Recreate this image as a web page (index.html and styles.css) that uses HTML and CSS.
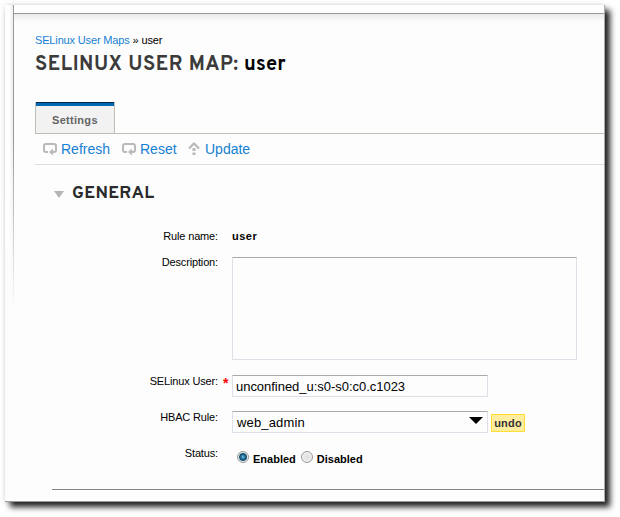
FILE: index.html
```html
<!DOCTYPE html>
<html lang="en">
<head>
<meta charset="utf-8">
<title>SELinux User Map</title>
<link rel="stylesheet" href="styles.css">
</head>
<body>
<main class="panel">
  <div class="frame-top"></div>
  <div class="frame-left"></div>
  <nav class="breadcrumb"><a>SELinux User Maps</a> » user</nav>
  <h1 class="title"><span class="title-kind">SELINUX USER MAP:</span><span class="title-name">user</span></h1>
  <div class="tabs"><div class="tab">Settings</div></div>
  <div class="toolbar">
    <a class="action refresh"><svg class="loop" width="15" height="13" viewBox="0 0 15 13"><path d="M5 9H3Q1 9 1 7V3Q1 1 3 1H11Q13 1 13 3V7Q13 9 11 9H8" fill="none" stroke="#b9b9b9" stroke-width="2"/><path d="M10 5.500V12.500L6 9Z" fill="#b9b9b9"/></svg>Refresh</a>
    <a class="action reset"><svg class="loop" width="15" height="13" viewBox="0 0 15 13"><path d="M5 9H3Q1 9 1 7V3Q1 1 3 1H11Q13 1 13 3V7Q13 9 11 9H8" fill="none" stroke="#b9b9b9" stroke-width="2"/><path d="M10 5.500V12.500L6 9Z" fill="#b9b9b9"/></svg>Reset</a>
    <a class="action update"><svg width="12" height="14" viewBox="0 0 12 14"><path d="M1 6.500L6 1.500L11 6.500" fill="none" stroke="#b9b9b9" stroke-width="2.200"/><path d="M4.500 6h3v3h-3zM4.500 10.500h3v2.500h-3z" fill="#b9b9b9"/></svg>Update</a>
  </div>
  <h2 class="section"><svg width="10" height="7" viewBox="0 0 10 7"><path d="M0 0H10L5 7Z" fill="#b5b5b5"/></svg>GENERAL</h2>
  <form class="form">
    <div class="row row-name"><span class="label">Rule name:</span><b class="value">user</b></div>
    <div class="row row-desc"><span class="label">Description:</span><div class="field area"></div></div>
    <div class="row row-user"><span class="label">SELinux User:</span><span class="required">*</span><div class="field input">unconfined_u:s0-s0:c0.c1023</div></div>
    <div class="row row-rule"><span class="label">HBAC Rule:</span><div class="field select">web_admin<svg width="14" height="7" viewBox="0 0 14 7"><path d="M0 0H14L7 7Z"/></svg></div><span class="undo">undo</span></div>
    <div class="row row-status"><span class="label">Status:</span><div class="options"><i class="radio checked"></i><b>Enabled</b><i class="radio second"></i><b>Disabled</b></div></div>
  </form>
</main>
</body>
</html>
```
FILE: styles.css
```css
* { box-sizing: border-box; }
body { margin: 0; width: 620px; height: 517px; overflow: hidden; background: #fff; font-family: "Liberation Sans", Arial, sans-serif; font-size: 11px; color: #000; }
.panel { position: relative; width: 600px; height: 497px; margin: 5px 0 0 5px; padding: 28px 0 0 30px; background: #fdfdfd; border-right: 1px solid #aaa; border-bottom: 1px solid #999; box-shadow: 5px 5px 6px #222, 0 0 5px #ddd; }
.frame-top { position: absolute; left: 9px; top: 0; width: 590px; height: 22px; background: linear-gradient(#fff 8px, #999 8px, #999 9px, #e9e9e9 9px, #fdfdfd 17px); }
.frame-left { position: absolute; left: 0; top: 0; width: 9px; height: 305px; background: linear-gradient(90deg, #fff 4px, #eee 8px, #999 8px); -webkit-mask-image: linear-gradient(#000 45%, transparent); mask-image: linear-gradient(#000 45%, transparent); }
.breadcrumb { height: 14px; line-height: 14px; white-space: nowrap; letter-spacing: -0.15px; }
a { color: #1680d3; }
.title { display: flex; margin: 7px 0 0; height: 23px; line-height: 23px; font-family: Overpass, "Open Sans", sans-serif; font-size: 20px; font-weight: 700; color: #3b3b3b; }
.title-kind { width: 209px; letter-spacing: .55px; white-space: nowrap; }
.title-name { color: #000; letter-spacing: .2px; }
.tabs { height: 57px; padding-top: 25px; border-bottom: 1px solid #c3beb5; }
.tab { width: 80px; height: 32px; border: 1px solid #c3beb5; border-top: 0; background: linear-gradient(#082b48 1px, #0068b3 1px, #0068b3 4px, #f2f2f2 4px); padding: 4px 0 0 16px; line-height: 28px; font-weight: 700; letter-spacing: .3px; color: #646464; }
.toolbar { display: flex; height: 31px; padding-left: 8px; border-bottom: 1px solid #ddd; font-size: 14px; line-height: 31px; }
.action { display: flex; align-items: center; gap: 3px; }
.refresh { width: 79px; }
.reset { width: 66px; }
.update { gap: 5px; }
.section { display: flex; align-items: center; gap: 8px; margin: 18px 0 0 19px; height: 22px; line-height: 22px; font-family: Overpass, "Open Sans", sans-serif; font-size: 17.5px; letter-spacing: .3px; color: #2a2a2a; }
.form { margin: 0 0 0 17px; height: 285px; border-bottom: 1px solid #858585; padding-top: 24px; }
.row { position: relative; display: flex; align-items: flex-start; }
.label { width: 166px; margin-right: 14px; line-height: 14px; text-align: right; letter-spacing: -.15px; }
.value { line-height: 14px; letter-spacing: .5px; }
.row-name { height: 28px; }
.row-desc { height: 118px; }
.row-user, .row-rule, .row-status { height: 36px; }
.row-desc .label { margin-top: -2px; }
.row-user .label, .row-rule .label, .row-status .label { margin-top: -1px; }
.field { border: 1px solid #dfdfe8; border-top-color: #aaa; border-radius: 1px; background: #fdfdfd; font-size: 13px; letter-spacing: -.03px; }
.area { width: 345px; height: 103px; }
.input, .select { width: 256px; height: 22px; line-height: 21px; padding-left: 3px; }
.select { display: flex; justify-content: space-between; padding-left: 4px; letter-spacing: .15px; }
.select svg { margin: 5px 4px 0 0; }
.required { position: absolute; left: 171px; top: 0; color: #f00; font-size: 14px; font-weight: 700; }
.undo { width: 34px; height: 18px; margin: 3px 0 0 3px; border: 1px solid #fd3; background: #ffeea0; color: #333; font-weight: 700; line-height: 16px; letter-spacing: .2px; text-align: center; }
.options { display: flex; align-items: center; height: 14px; margin: 3px 0 0 5px; }
.options b { position: relative; top: 2px; }
.radio { width: 12px; height: 12px; border: 1px solid #999; border-radius: 50%; background: radial-gradient(#ddd, #f8f8f8); margin-right: 4px; }
.checked { background: radial-gradient(circle, #68bde5 0, #125076 3px, #125076 3.5px, #eee 4.5px); }
.second { margin-left: 5px; }
```
